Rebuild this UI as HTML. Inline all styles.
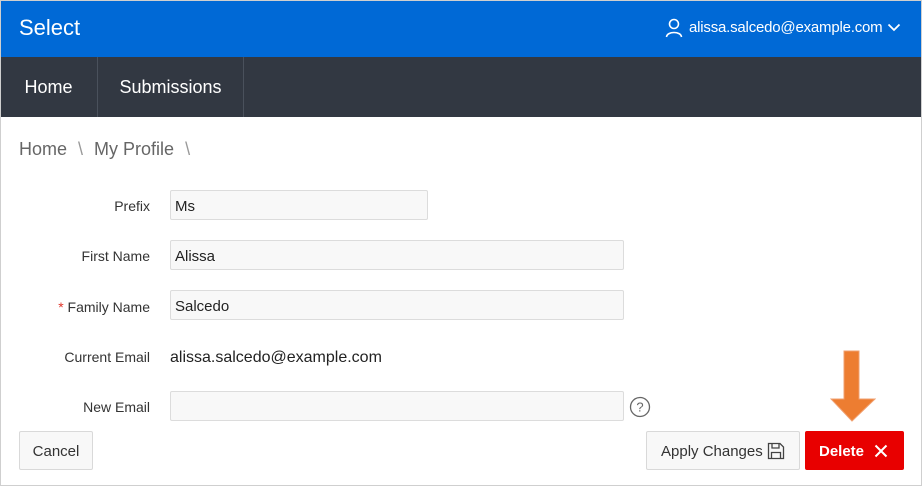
<!DOCTYPE html>
<html><head><style>
*{box-sizing:border-box;margin:0;padding:0}
body{width:922px;height:486px;overflow:hidden;background:#fff;font-family:"Liberation Sans",sans-serif;position:relative}
.frame{position:absolute;left:0;top:0;width:922px;height:486px;border:1px solid #cfcfcf;border-top:none}
.hdr{position:absolute;left:0;top:0;width:922px;height:57px;background:#0069d6;border:1px solid #cfcfcf;border-bottom:none}
.a{position:absolute;color:#fff}
.nav{position:absolute;left:0;top:57px;width:922px;height:60px;background:#323842}
.nav div{position:absolute;top:0;height:60px;line-height:60px;color:#fff;font-size:18px;text-align:center;border-right:1px solid #4a515c}
.lbl{position:absolute;right:772px;font-size:14px;color:#333;text-align:right}
.in{position:absolute;left:170px;height:30px;background:#f8f8f8;border:1px solid #dcdcdc;border-radius:2px;font-size:15px;line-height:31px;padding-left:4px;color:#222}
.btn{position:absolute;top:431px;height:39px;border:1px solid #d9d9d9;border-radius:2px;background:#f8f8f8;font-size:15px;line-height:39px;color:#333}
</style></head><body>
<div class="hdr"></div>
<div class="a" style="left:19px;top:15px;font-size:22px">Select</div>
<svg style="position:absolute;left:665px;top:18px" width="18" height="20" viewBox="0 0 18 20"><circle cx="9" cy="6" r="4.5" fill="none" stroke="#fff" stroke-width="1.6"/><path d="M1.5 19 C2 13 16 13 16.5 19" fill="none" stroke="#fff" stroke-width="1.6"/></svg>
<div class="a" style="left:689px;top:19px;font-size:15px;letter-spacing:-0.2px">alissa.salcedo@example.com</div>
<svg style="position:absolute;left:887px;top:23px" width="14" height="9" viewBox="0 0 14 9"><path d="M1.5 1.5 L7 7 L12.5 1.5" fill="none" stroke="#fff" stroke-width="1.8"/></svg>
<div class="nav"><div style="left:0;width:98px">Home</div><div style="left:98px;width:146px">Submissions</div></div>
<div class="frame"></div>
<div style="position:absolute;left:19px;top:139px;font-size:18px;color:#666">Home <span style="color:#999;margin:0 6px">\</span> My Profile <span style="color:#999;margin-left:6px">\</span></div>
<div class="lbl" style="top:198px">Prefix</div>
<div class="in" style="top:190px;width:258px">Ms</div>
<div class="lbl" style="top:248px">First Name</div>
<div class="in" style="top:240px;width:454px">Alissa</div>
<div class="lbl" style="top:299px"><span style="color:#e0352a">*</span> Family Name</div>
<div class="in" style="top:290px;width:454px">Salcedo</div>
<div class="lbl" style="top:349px">Current Email</div>
<div style="position:absolute;left:170px;top:349px;font-size:16px;color:#222">alissa.salcedo@example.com</div>
<div class="lbl" style="top:399px">New Email</div>
<div class="in" style="top:391px;width:454px"></div>
<svg style="position:absolute;left:629px;top:396px" width="22" height="22" viewBox="0 0 22 22"><circle cx="11" cy="11" r="9.5" fill="none" stroke="#666" stroke-width="1.3"/><text x="11" y="15.5" font-size="13" text-anchor="middle" fill="#666" font-family="Liberation Sans">?</text></svg>
<div class="btn" style="left:19px;width:74px;text-align:center">Cancel</div>
<div class="btn" style="left:646px;width:154px;padding-left:14px">Apply Changes
<svg style="position:absolute;left:120px;top:10px" width="18" height="18" viewBox="0 0 18 18"><path d="M1.5 1.5 H13 L16.5 5 V16.5 H1.5 Z M5 1.5 V6 H12 V1.5 M4.5 16.5 V10.5 H13.5 V16.5" fill="none" stroke="#444" stroke-width="1.3"/></svg></div>
<div class="btn" style="left:805px;width:99px;background:#e80000;border-color:#e80000;color:#fff;font-weight:bold;padding-left:13px">Delete
<svg style="position:absolute;left:68px;top:12px" width="14" height="14" viewBox="0 0 14 14"><path d="M1.5 1.5 L12.5 12.5 M12.5 1.5 L1.5 12.5" stroke="#fff" stroke-width="2"/></svg></div>
<svg style="position:absolute;left:830px;top:350px" width="46" height="72" viewBox="0 0 46 72"><path d="M14 1 H29 V49 H45 L22 71 L1 49 H14 Z" fill="#ed7d31" stroke="#f0a070" stroke-width="1"/></svg>
</body></html>
